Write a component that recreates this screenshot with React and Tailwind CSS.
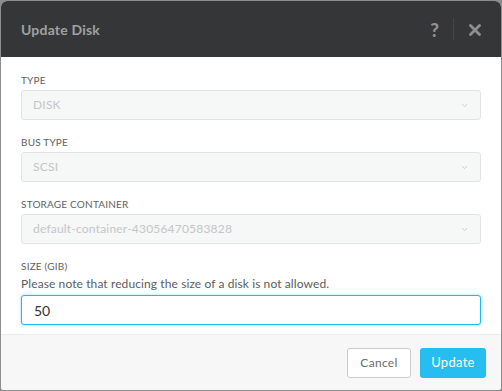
import { ChevronDown } from 'lucide-react'

const FONT = { fontFamily: 'Lato, "Liberation Sans", sans-serif' }

function Field({ label, value }) {
  return (
    <div className="flex flex-col">
      <label className="h-[14px] text-[10px] leading-[14px] uppercase text-[#5f6163] tracking-[0.2px]">{label}</label>
      <div className="mt-[3px] h-[30px] flex items-center justify-between rounded-[3px] border border-[#e2e4e4] bg-[#f6f7f7] pl-[11px] pr-[11px]">
        <span className="text-[12px] text-[#c4c6c8] tracking-[0.2px]">{value}</span>
        <ChevronDown size={9} strokeWidth={2} className="text-[#bcbec0]" />
      </div>
    </div>
  )
}

export default function App() {
  return (
    <div className="w-[502px] h-[391px] bg-[#8e8e8e] p-px" style={FONT}>
      <div className="h-full flex flex-col overflow-hidden rounded-t-[6px] rounded-b-[3px] bg-white">
        {/* Header */}
        <div className="h-[56px] shrink-0 flex items-center justify-between bg-[#353638] pl-[20px] pr-[20px]">
          <h2 className="text-[14px] font-bold text-[#a0a1a3] tracking-[0.2px]">Update Disk</h2>
          <div className="flex items-center h-full">
            <span className="text-[19px] font-black text-[#8e8f91] leading-none">?</span>
            <div className="ml-[14px] mr-[15px] w-px h-[22px] bg-[#434446]" />
            <svg width="12" height="12" viewBox="0 0 12 12" className="mt-[2px]">
              <path d="M1.5 1.5 L10.5 10.5 M10.5 1.5 L1.5 10.5" stroke="#8e8f91" strokeWidth="2.8" strokeLinecap="round" />
            </svg>
          </div>
        </div>

        {/* Body */}
        <div className="flex-1 flex flex-col gap-[15px] px-[20px] pt-[16px]">
          <Field label="Type" value="DISK" />
          <Field label="Bus Type" value="SCSI" />
          <Field label="Storage Container" value="default-container-43056470583828" />
          <div className="flex flex-col">
            <label className="h-[14px] text-[10px] leading-[14px] uppercase text-[#5f6163] tracking-[0.2px]">Size (GiB)</label>
            <p className="mt-[3px] h-[16px] text-[12px] leading-[16px] text-[#5a5c5e] tracking-[0.1px]">
              Please note that reducing the size of a disk is not allowed.
            </p>
            <input
              defaultValue="50"
              className="mt-[3px] h-[30px] rounded-[3px] border border-[#22b8ec] bg-white px-[12px] text-[14px] text-[#333] outline-none shadow-[0_0_3px_1px_rgba(34,184,236,0.25)]"
            />
          </div>
        </div>

        {/* Footer */}
        <div className="h-[56px] shrink-0 flex items-center justify-end gap-[9px] border-t border-[#ececec] bg-[#f7f7f7] pr-[15px]">
          <button className="h-[30px] w-[64px] rounded-[3px] border border-[#c9cbcd] bg-white text-[12px] text-[#6a6c6e] tracking-[0.3px]">
            Cancel
          </button>
          <button className="h-[30px] w-[66px] rounded-[3px] bg-[#26bdf0] text-[13px] text-white tracking-[0.3px]">
            Update
          </button>
        </div>
      </div>
    </div>
  )
}
